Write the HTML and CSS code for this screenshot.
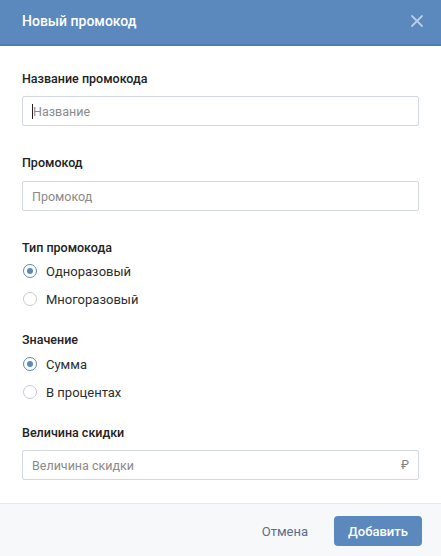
FILE: index.html
```html
<!DOCTYPE html>
<html lang="ru">
<head>
<meta charset="utf-8">
<link rel="stylesheet" href="styles.css">
</head>
<body>
<div class="modal">
  <div class="header">
    <div class="title">Новый промокод</div>
    <svg class="close" width="14" height="14" viewBox="0 0 14 14"><path d="M2 2L12 12M12 2L2 12" stroke="#b9cde6" stroke-width="1.8" stroke-linecap="round"/></svg>
  </div>
  <div class="body">
    <div class="label">Название промокода</div>
    <div class="input"><span class="caret"></span><span class="ph">Название</span></div>

    <div class="label sec">Промокод</div>
    <div class="input"><span class="ph">Промокод</span></div>

    <div class="label sec tight">Тип промокода</div>
    <div class="radios">
      <div class="radio on"><span class="dot"></span>Одноразовый</div>
      <div class="radio"><span class="dot"></span>Многоразовый</div>
    </div>

    <div class="label sec2">Значение</div>
    <div class="radios">
      <div class="radio on"><span class="dot"></span>Сумма</div>
      <div class="radio"><span class="dot"></span>В процентах</div>
    </div>

    <div class="label sec3">Величина скидки</div>
    <div class="input"><span class="ph">Величина скидки</span><span class="rub">₽</span></div>
  </div>
  <div class="footer">
    <span class="cancel">Отмена</span>
    <span class="btn">Добавить</span>
  </div>
</div>
</body>
</html>
```

FILE: styles.css
```css
html, body {
  margin: 0;
  padding: 0;
  background: #fff;
}
body {
  font-family: Roboto, "Liberation Sans", sans-serif;
  font-size: 13px;
  color: #222;
  width: 441px;
  height: 556px;
  overflow: hidden;
}
.modal {
  display: flex;
  flex-direction: column;
  height: 556px;
}
.header {
  height: 44px;
  background: #5b88bd;
  border-bottom: 2px solid #4f7cb0;
  display: flex;
  align-items: center;
  justify-content: space-between;
  padding: 0 17px 0 22px;
  flex-shrink: 0;
}
.title {
  color: #fff;
  font-weight: 500;
  font-size: 14px;
  margin-top: -2px;
}
.close {
  margin-top: -2px;
}
.body {
  padding: 25px 22px 0 22px;
  display: flex;
  flex-direction: column;
  flex: 1;
}
.label {
  font-weight: 500;
  font-size: 12.5px;
  line-height: 16px;
  color: #222;
  margin-bottom: 9px;
}
.label.sec {
  margin-top: 29px;
  margin-bottom: 10px;
}
.label.tight {
  margin-bottom: 5px;
}
.label.sec2 {
  margin-top: 23px;
  margin-bottom: 6px;
}
.label.sec3 {
  margin-top: 23px;
  margin-bottom: 9px;
}
.input {
  height: 28px;
  border: 1px solid #d3d9de;
  border-radius: 2px;
  display: flex;
  align-items: center;
  padding: 0 10px 0 9px;
  position: relative;
}
.ph {
  color: #8a8a8a;
  font-size: 12.5px;
  flex: 1;
}
.caret {
  width: 1px;
  height: 15px;
  background: #222;
  margin-right: 0;
}
.rub {
  color: #828282;
  font-size: 12px;
  margin-right: -1px;
}
.radios {
  display: flex;
  flex-direction: column;
  gap: 8px;
}
.radio {
  display: flex;
  align-items: center;
  height: 20px;
  font-size: 13px;
  color: #2c2d2e;
}
.dot {
  width: 12px;
  height: 12px;
  border: 1px solid #c5cbd2;
  border-radius: 50%;
  margin: 0 9px 0 1px;
  display: flex;
  align-items: center;
  justify-content: center;
  box-sizing: content-box;
}
.radio.on .dot {
  border-color: #5b88bd;
}
.radio.on .dot::after {
  content: "";
  width: 6px;
  height: 6px;
  border-radius: 50%;
  background: #5b88bd;
}
.footer {
  height: 53px;
  border-top: 1px solid #e7e8ec;
  background: #f7f8fa;
  display: flex;
  align-items: center;
  justify-content: flex-end;
  padding: 2px 19px 0 0;
  box-sizing: border-box;
  gap: 26px;
  flex-shrink: 0;
}
.cancel {
  color: #5a6e8a;
  font-size: 13px;
}
.btn {
  width: 88px;
  height: 30px;
  background: #5b88bd;
  border-radius: 4px;
  color: #fff;
  font-weight: 500;
  font-size: 13px;
  display: flex;
  align-items: center;
  justify-content: center;
}
```
